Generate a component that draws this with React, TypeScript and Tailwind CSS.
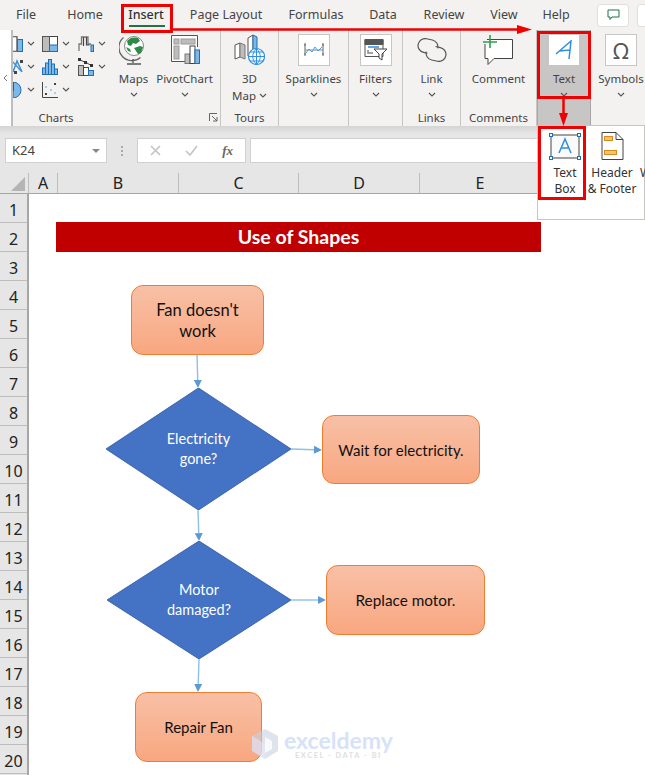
import React from "react";

const ui = "font-['Noto_Sans','Open_Sans',sans-serif]";
const body = "font-['Lato','Noto_Sans',sans-serif]";

const Chevron = ({ className = "" }: { className?: string }) => (
  <svg width="8" height="5" viewBox="0 0 8 5" className={className}>
    <path d="M1 1l3 3 3-3" fill="none" stroke="#555" strokeWidth="1.1" />
  </svg>
);

const tabs: [string, string][] = [
  ["File", "w-[52px]"],
  ["Home", "w-[66px]"],
  ["Insert", "w-[56px]"],
  ["Page Layout", "w-[104px]"],
  ["Formulas", "w-[76px]"],
  ["Data", "w-[58px]"],
  ["Review", "w-[64px]"],
  ["View", "w-[56px]"],
  ["Help", "w-[48px]"],
];

const B = "#1f6fb5";
const L = "#7db8e8";
const G = "#555";
const S = "#bdbdbd";

const chartCells: React.ReactNode[] = [
  <svg width="10" height="16" viewBox="0 0 10 16"><path d="M0 .75h4V15.25H0" fill="#fff" stroke="#444" strokeWidth="1.2" /><rect x="4.5" y="3.5" width="5" height="12" fill={L} stroke={B} /></svg>,
  <svg width="16" height="16" viewBox="0 0 16 16"><rect x=".5" y=".5" width="15" height="15" fill="#fff" stroke="#444" /><rect x=".5" y=".5" width="7" height="15" fill={S} stroke={G} /><rect x="7.5" y="9" width="8" height="6.5" fill={L} stroke={B} /></svg>,
  <svg width="16" height="16" viewBox="0 0 16 16"><path d="M1 15V8h2.5V1H10v7h3" fill="none" stroke="#777" strokeWidth="1.3" /><path d="M5.5 1v9" stroke="#444" strokeWidth="1.2" /><path d="M8.5 1v8h3" fill="none" stroke="#444" strokeWidth="1.2" /><rect x="13" y="9" width="2.5" height="6.5" fill={L} stroke={B} /></svg>,
  <svg width="10" height="16" viewBox="0 0 10 16"><path d="M0 13L4 2l5 11" fill="none" stroke="#3a8fd8" strokeWidth="1.5" /><path d="M0 3l8 9" stroke="#3a8fd8" strokeWidth="1.2" /><rect x="7" y="1" width="3" height="3" fill="#444" /><rect x="1" y="12" width="3" height="3" fill="#444" /></svg>,
  <svg width="16" height="16" viewBox="0 0 16 16"><rect x=".5" y="9" width="3" height="6.5" fill={L} stroke={B} /><rect x="3.5" y="4" width="3" height="11.5" fill={L} stroke={B} /><rect x="6.5" y=".5" width="3" height="15" fill={L} stroke={B} /><rect x="9.5" y="5" width="3" height="10.5" fill={L} stroke={B} /><rect x="12.5" y="10" width="3" height="5.5" fill={L} stroke={B} /></svg>,
  <svg width="16" height="18" viewBox="0 0 16 18"><path d="M2 2l7 3 5 3" stroke="#444" fill="none" /><rect x="0" y="0" width="3" height="3" fill="#333" /><rect x="6" y="3" width="3" height="3" fill="#333" /><rect x="12" y="6" width="3" height="3" fill="#333" /><rect x=".5" y="7.5" width="5" height="10" fill={S} stroke={G} /><rect x="5.5" y="9.5" width="5" height="8" fill="#fff" stroke="#444" /><rect x="10.5" y="12.5" width="5" height="5" fill={L} stroke={B} /></svg>,
  <svg width="10" height="16" viewBox="0 0 10 16"><path d="M0 0a8 8 0 0 1 0 16z" fill={L} stroke={B} /><path d="M0 0v9" stroke="#555" strokeWidth="2" /></svg>,
  <svg width="16" height="16" viewBox="0 0 16 16"><path d="M.5 0v15.5H16" fill="none" stroke="#444" /><rect x="3" y="4" width="2" height="2" fill="#a8cdee" /><rect x="8" y="7" width="2" height="2" fill="#a8cdee" /><rect x="12" y="10" width="2" height="2" fill="#a8cdee" /><rect x="12" y="1" width="2" height="2" fill="#444" /><rect x="3" y="11" width="2" height="2" fill="#444" /></svg>,
];

const Globe = () => (
  <svg width="30" height="32" viewBox="0 0 30 32">
    <circle cx="15" cy="12" r="9.5" fill="#fff" stroke="#888" />
    <path d="M8 7c3-4 8-4 11-3l2 3-4 3-3-1-2 3-3-1zM15 14l6-2 3 1-2 6-3 1-2-3zM7 13l4 2 1 3-3-1z" fill="#2e8b46" />
    <path d="M4.5 3.5a13 13 0 0 0 17 20" fill="none" stroke="#666" strokeWidth="1.3" />
    <path d="M14 25v4M8 30h14" stroke="#555" strokeWidth="1.3" />
  </svg>
);

const PivotIcon = () => (
  <svg width="30" height="30" viewBox="0 0 30 30">
    <path d="M21 26.5H1.5v-26h26V12" fill="#fff" stroke="#555" />
    <rect x="4" y="4" width="5" height="5" fill={S} stroke="#999" />
    <rect x="11" y="4" width="14" height="5" fill={S} stroke="#999" />
    <rect x="4" y="11" width="5" height="13" fill={S} stroke="#999" />
    <rect x="15" y="19" width="5" height="9.5" fill={S} stroke="#777" />
    <rect x="20" y="11" width="5" height="17.5" fill="#fff" stroke="#444" />
    <rect x="25" y="15" width="4.5" height="13.5" fill={L} stroke={B} />
  </svg>
);

const MapIcon = () => (
  <svg width="31" height="32" viewBox="0 0 31 32">
    <path d="M1 11l5-2v14l-5 2z" fill="#fff" stroke="#555" />
    <path d="M6 9l5 2v14l-5-2z" fill={S} stroke="#777" />
    <path d="M14 4l5-3v18l-5 3z" fill="#fff" stroke="#555" />
    <path d="M19 1l4 2v14l-4 2z" fill={L} stroke={B} />
    <circle cx="22.5" cy="22.5" r="8" fill="#fff" stroke="#2f8fe0" strokeWidth="1.2" />
    <path d="M14.5 22.5h16M16 18h13M16 27h13M22.5 14.5v16M22.5 14.5c-5 5-5 11 0 16M22.5 14.5c5 5 5 11 0 16" fill="none" stroke="#2f8fe0" />
  </svg>
);

const SparkIcon = () => (
  <svg width="20" height="16" viewBox="0 0 20 16">
    <path d="M1 1v13M19 1v13M0 3h2M0 12h2M18 3h2M18 12h2" stroke="#666" />
    <path d="M1 8h18" stroke="#888" />
    <path d="M2 11l3-4 3 3 3-5 3 4 4-4" fill="none" stroke="#4a9be0" />
  </svg>
);

const FilterIcon = () => (
  <svg width="24" height="22" viewBox="0 0 24 22">
    <path d="M1 .5h18v5H1z" fill="#555" stroke="#555" />
    <path d="M1 .5h18v17H1z" fill="#fff" fillOpacity="0" stroke="#555" />
    <path d="M4 8h11" stroke="#2b8be0" strokeWidth="1.5" />
    <path d="M4 11v3h5" fill="none" stroke="#888" strokeWidth="1.5" />
    <path d="M10 10h13l-5 5v6l-3-2v-4z" fill="#fff" stroke="#444" />
  </svg>
);

const LinkIcon = () => (
  <svg width="30" height="24" viewBox="0 0 30 24">
    <path d="M12 15H8a7 7 0 0 1 0-14h6a7 7 0 0 1 7 7" fill="none" stroke="#555" strokeWidth="1.2" transform="rotate(12 10 8)" />
    <path d="M17 9h5a7 7 0 0 1 0 14h-6a7 7 0 0 1-7-7" fill="none" stroke="#555" strokeWidth="1.2" transform="rotate(12 20 16)" />
  </svg>
);

const CommentIcon = () => (
  <svg width="32" height="30" viewBox="0 0 32 30">
    <path d="M5 4.5h25.500v19H12l-6 6v-6H3V9" fill="#fff" stroke="#444" />
    <path d="M8 0v13M1 7h14" stroke="#2e9e4f" strokeWidth="1.6" />
  </svg>
);

const TextIcon = () => (
  <svg width="18" height="20" viewBox="0 0 18 20">
    <path d="M1 14L16 1l-2 18M4.500 11l10-1" fill="none" stroke="#2f8fe0" strokeWidth="1.5" />
  </svg>
);

const Big = ({ icon, label, boxed, w }: { icon: React.ReactNode; label: React.ReactNode; boxed?: boolean; w: string }) => (
  <div className={`${w} flex flex-col items-center`}>
    <div className={`h-[32px] flex items-center justify-center ${boxed ? "w-[32px] bg-white border border-[#c8c6c4]" : "w-full"}`}>{icon}</div>
    <div className="text-[11.5px] leading-[16px] text-[#444] mt-[5px] text-center whitespace-nowrap">{label}</div>
    <Chevron className="mt-[5px]" />
  </div>
);

const Group = ({ w, label, children }: { w: string; label?: string; children: React.ReactNode }) => (
  <div className={`${w} h-[96px] flex flex-col border-r border-[#c8c6c4] shrink-0`}>
    <div className="flex justify-center pt-[4px] h-[80px]">{children}</div>
    <div className="text-[11.5px] leading-[16px] text-[#444] text-center">{label}</div>
  </div>
);

const rows = Array.from({ length: 20 }, (_, i) => i + 1);
const cols: [string, string][] = [
  ["A", "w-[29px]"],
  ["B", "w-[121px]"],
  ["C", "w-[120px]"],
  ["D", "w-[121px]"],
  ["E", "w-[121px]"],
];

const Box = ({ x, y, w, h, children, size = "text-[15px]" }: { x: string; y: string; w: string; h: string; children: React.ReactNode; size?: string }) => (
  <div className={`absolute ${x} ${y} ${w} ${h} rounded-[12px] border border-[#ed7d31] bg-gradient-to-b from-[#f8c0a6] to-[#f8a780] flex items-center justify-center text-center text-[#111] ${size} leading-[21px] ${body}`}>
    {children}
  </div>
);

const Diamond = ({ x, y, w, h, children }: { x: string; y: string; w: string; h: string; children: React.ReactNode }) => (
  <div className={`absolute ${x} ${y} ${w} ${h} flex items-center justify-center text-center text-white text-[14.500px] leading-[20px] ${body}`}>
    <svg className="absolute inset-0 w-full h-full" viewBox="0 0 100 100" preserveAspectRatio="none">
      <polygon points="0,50 50,0 100,50 50,100" fill="#4472c4" stroke="#3a62ab" strokeWidth="0.6" />
    </svg>
    <div className="relative">{children}</div>
  </div>
);

const arrows: [number, number, number, number][] = [
  [168, 161, 169, 194],
  [262, 255, 293, 256],
  [169, 316, 170, 347],
  [262, 406, 297, 406],
  [170, 465, 169, 498],
];

export default function App() {
  return (
    <div className={`relative w-[645px] h-[775px] overflow-hidden bg-white ${ui}`}>
      {/* Tabs */}
      <div className="h-[30px] bg-[#f3f2f1] flex items-center">
        {tabs.map(([t, w]) => (
          <div key={t} className={`${w} shrink-0 text-center text-[12.500px] leading-[30px] ${t === "Insert" ? "font-medium text-[#333]" : "text-[#444]"}`}>
            {t}
          </div>
        ))}
        <div className="w-[17px] shrink-0" />
        <div className="w-[32px] h-[23px] shrink-0 bg-white border border-[#e1dfdd] rounded-[3px] flex items-center justify-center">
          <svg width="13" height="12" viewBox="0 0 13 12"><path d="M1 1h11v7H5L3 10.500V8H1z" fill="none" stroke="#217346" /></svg>
        </div>
        <div className="w-[8px] shrink-0" />
        <div className="w-[20px] h-[23px] shrink-0 bg-white border border-[#e1dfdd] rounded-[3px]" />
      </div>

      {/* Ribbon */}
      <div className="h-[96px] bg-[#f3f2f1] flex">
        <div className="w-[13px] shrink-0 bg-white border-r-2 border-[#bdbdbd] flex items-center justify-center">
          <svg width="5" height="8" viewBox="0 0 5 8"><path d="M4 1L1 4l3 3" fill="none" stroke="#777" /></svg>
        </div>
        <div className="w-[208px] h-[96px] shrink-0 border-r border-[#c8c6c4] flex flex-col relative">
          <div className="flex h-[80px]">
            <div className="w-[100px] pt-[2px] grid grid-cols-[29px_36px_36px] grid-rows-[23px_23px_23px]">
              {chartCells.map((ic, i) => (
                <div key={i} className="flex items-center gap-[4px]">
                  <span className={i % 3 === 0 ? "w-[10px] flex" : "w-[16px] flex"}>{ic}</span>
                  <Chevron />
                </div>
              ))}
            </div>
            <div className="pt-[4px] flex ml-[2px]">
              <Big w="w-[37px]" icon={<Globe />} label="Maps" />
              <Big w="w-[65px]" icon={<PivotIcon />} label="PivotChart" />
            </div>
          </div>
          <div className="text-[11.5px] leading-[16px] text-[#444] w-[86px] text-center">Charts</div>
          <svg width="9" height="9" viewBox="0 0 9 9" className="absolute right-[2px] bottom-[4px]"><path d="M.5 8V.5H8M3 3l5 5M8 4v4H4" fill="none" stroke="#666" /></svg>
        </div>
        <Group w="w-[58px]" label="Tours">
          <div className="flex flex-col items-center">
            <div className="h-[32px] flex items-center"><MapIcon /></div>
            <div className="text-[11.5px] leading-[17px] text-[#444] mt-[4px] text-center">3D</div>
            <div className="text-[11.5px] leading-[17px] text-[#444] flex items-center gap-[3px]">Map <Chevron /></div>
          </div>
        </Group>
        <Group w="w-[70px]">
          <Big w="w-[66px]" boxed icon={<SparkIcon />} label="Sparklines" />
        </Group>
        <Group w="w-[54px]">
          <Big w="w-[50px]" boxed icon={<FilterIcon />} label="Filters" />
        </Group>
        <Group w="w-[58px]" label="Links">
          <Big w="w-[50px]" icon={<LinkIcon />} label="Link" />
        </Group>
        <Group w="w-[76px]" label="Comments">
          <div className="flex flex-col items-center">
            <div className="h-[32px] flex items-center"><CommentIcon /></div>
            <div className="text-[11.5px] leading-[16px] text-[#444] mt-[5px]">Comment</div>
          </div>
        </Group>
        <div className="w-[54px] h-[96px] shrink-0 bg-[#c8c6c4] pt-[4px] flex justify-center border-x border-[#a8a6a4]">
          <Big w="w-[50px]" boxed icon={<TextIcon />} label="Text" />
        </div>
        <div className="flex-1 pt-[4px] pl-[3px] flex justify-center">
          <Big w="w-[54px]" boxed icon={<span className="text-[22px] leading-none text-[#555]">Ω</span>} label="Symbols" />
        </div>
      </div>

      {/* Formula bar */}
      <div className="h-[47px] bg-gradient-to-b from-[#d4d4d4] to-[#e6e6e6] to-[16%] flex items-start pt-[12px] pl-[5px]">
        <div className="w-[102px] h-[25px] bg-white border border-[#d0d0d0] flex items-center justify-between pl-[6px] pr-[6px] text-[13px] text-[#444]">
          K24
          <svg width="8" height="4" viewBox="0 0 8 4"><path d="M0 0h8L4 4z" fill="#888" /></svg>
        </div>
        <div className="w-[30px] h-[25px] flex flex-col items-center justify-center gap-[2px]">
          <span className="w-[2px] h-[2px] bg-[#aaa]" />
          <span className="w-[2px] h-[2px] bg-[#aaa]" />
          <span className="w-[2px] h-[2px] bg-[#aaa]" />
        </div>
        <div className="w-[109px] h-[25px] bg-white border border-[#d0d0d0] flex items-center justify-between px-[12px]">
          <svg width="11" height="11" viewBox="0 0 11 11"><path d="M1 1l9 9M10 1l-9 9" stroke="#c4c4c4" strokeWidth="1.6" /></svg>
          <svg width="13" height="11" viewBox="0 0 13 11"><path d="M1 6l4 4 7-9" fill="none" stroke="#c4c4c4" strokeWidth="1.6" /></svg>
          <span className="font-['Liberation_Serif',serif] italic font-bold text-[13px] text-[#666] leading-none">fx</span>
        </div>
        <div className="w-[4px]" />
        <div className="flex-1 h-[25px] bg-white border border-[#d0d0d0]" />
      </div>

      {/* Column headers */}
      <div className="h-[21px] bg-[#e6e6e6] flex border-b border-[#a6a6a6] relative">
        <div className="w-[28px] h-full relative shrink-0">
          <svg width="14" height="14" viewBox="0 0 14 14" className="absolute right-[3px] bottom-[2px]"><path d="M14 0v14H0z" fill="#b4b4b4" /></svg>
        </div>
        {cols.map(([c, w]) => (
          <div key={c} className={`${w} shrink-0 border-l border-[#bdbdbd] text-center text-[16px] leading-[21px] text-[#222]`}>{c}</div>
        ))}
      </div>

      {/* Sheet */}
      <div className="flex">
        <div className="w-[29px] shrink-0 border-r-2 border-[#a6a6a6] bg-[#e6e6e6]">
          {rows.map((r) => (
            <div key={r} className="h-[29px] border-b border-[#bdbdbd] text-center text-[16px] leading-[33px] text-[#222]">{r}</div>
          ))}
        </div>
        <div className="relative flex-1 h-[581px]">
          <div className={`ml-[27px] mt-[28px] w-[485px] h-[30px] bg-[#c00000] text-white font-bold text-[19.500px] leading-[30px] text-center ${body}`}>Use of Shapes</div>

          <svg className="absolute inset-0 w-full h-full">
            {arrows.map(([x1, y1, x2, y2], i) => {
              const dx = x2 - x1, dy = y2 - y1, len = Math.hypot(dx, dy);
              const ux = dx / len, uy = dy / len;
              const bx = x2 - ux * 8, by = y2 - uy * 8;
              return (
                <g key={i}>
                  <line x1={x1} y1={y1} x2={bx} y2={by} stroke="#8fc0e8" strokeWidth="1.4" />
                  <polygon points={`${x2},${y2} ${bx - uy * 4},${by + ux * 4} ${bx + uy * 4},${by - ux * 4}`} fill="#5b9bd5" />
                </g>
              );
            })}
          </svg>

          <Box x="left-[102px]" y="top-[91px]" w="w-[133px]" h="h-[70px]" size="text-[16.500px] pt-[1px]">Fan doesn't<br />work</Box>
          <Diamond x="left-[77px]" y="top-[194px]" w="w-[185px]" h="h-[122px]">Electricity<br />gone?</Diamond>
          <Box x="left-[293px]" y="top-[221px]" w="w-[158px]" h="h-[69px]" size="text-[15px] pt-[1px]">Wait for electricity.</Box>
          <Diamond x="left-[78px]" y="top-[347px]" w="w-[184px]" h="h-[118px]">Motor<br />damaged?</Diamond>
          <Box x="left-[297px]" y="top-[371px]" w="w-[159px]" h="h-[70px]" size="text-[15.300px]">Replace motor.</Box>
          <Box x="left-[106px]" y="top-[498px]" w="w-[127px]" h="h-[70px]">Repair Fan</Box>

          {/* Watermark */}
          <div className="absolute left-[221px] top-[534px] flex items-center opacity-90">
            <svg width="30" height="32" viewBox="0 0 30 32">
              <path d="M15 1l13 7v15l-13 8-13-8V8z" fill="#c9d0e0" fillOpacity="0.65" />
              <path d="M15 9l7 4v8l-7 4z" fill="#fff" fillOpacity="0.8" />
              <path d="M2 8l13 8v15L2 23z" fill="#dfe6f8" fillOpacity="0.7" />
            </svg>
            <div className="ml-[4px] flex flex-col items-center">
              <div className={`${body} font-bold text-[23px] leading-[22px] text-[#d3dffa]`}>exceldemy</div>
              <div className={`${body} font-bold text-[7.500px] leading-[9px] tracking-[1.500px] text-[#dcdcdc]`}>EXCEL - DATA - BI</div>
            </div>
          </div>
        </div>
      </div>

      {/* Text dropdown */}
      <div className="absolute left-[537px] top-[125px] w-[108px] h-[95px] bg-white border border-[#c8c6c4] flex pl-[4px] pt-[6px] text-[12px] leading-[16px] text-[#333]">
        <div className="w-[46px] shrink-0 flex flex-col items-center">
          <svg width="32" height="28" viewBox="0 0 32 28">
            <rect x="2" y="3" width="28" height="23" fill="#fafafa" stroke="#444" />
            <path d="M10 21L16 7l6 14M12 16h8" fill="none" stroke="#2f8fe0" strokeWidth="1.5" />
            <rect x="0.500" y="1.500" width="3" height="3" fill="#fff" stroke="#1f6fb5" />
            <rect x="28.500" y="1.500" width="3" height="3" fill="#fff" stroke="#1f6fb5" />
            <rect x="0.500" y="24.500" width="3" height="3" fill="#fff" stroke="#1f6fb5" />
            <rect x="28.500" y="24.500" width="3" height="3" fill="#fff" stroke="#1f6fb5" />
          </svg>
          <div className="mt-[5px] text-center">Text<br />Box</div>
        </div>
        <div className="w-[44px] ml-[2px] shrink-0 flex flex-col items-center">
          <svg width="24" height="28" viewBox="0 0 24 28">
            <path d="M2 .5h14l7 7v20H2z" fill="#fff" stroke="#444" />
            <path d="M16 .5v7h7" fill="none" stroke="#444" />
            <rect x="4.500" y="4.500" width="8" height="4" fill="#f6c26b" stroke="#d98a1f" />
            <rect x="4.500" y="18.500" width="12" height="4" fill="#f6c26b" stroke="#d98a1f" />
          </svg>
          <div className="mt-[5px] text-center whitespace-nowrap">Header<br />&amp; Footer</div>
        </div>
        <div className="mt-[33px] ml-[6px] shrink-0">W</div>
      </div>

      {/* Red annotation callouts */}
      <div className="absolute left-[121px] top-[4px] w-[52px] h-[29px] border-[3px] border-[#f00000]" />
      <div className="absolute left-[129px] top-[25px] w-[36px] h-[2px] bg-[#217346]" />
      <div className="absolute left-[537px] top-[31px] w-[54px] h-[68px] border-[3px] border-[#f00000]" />
      <div className="absolute left-[538px] top-[126px] w-[48px] h-[74px] border-[3px] border-[#f00000]" />
      <svg className="absolute inset-0 w-full h-full pointer-events-none">
        <path d="M173 29.500H520" stroke="#f00000" strokeWidth="2.500" />
        <polygon points="517,25 532,29.500 517,34" fill="#f00000" />
        <path d="M563.500 99V116" stroke="#f00000" strokeWidth="2.500" />
        <polygon points="559,113 568,113 563.500,126" fill="#f00000" />
      </svg>
    </div>
  );
}
